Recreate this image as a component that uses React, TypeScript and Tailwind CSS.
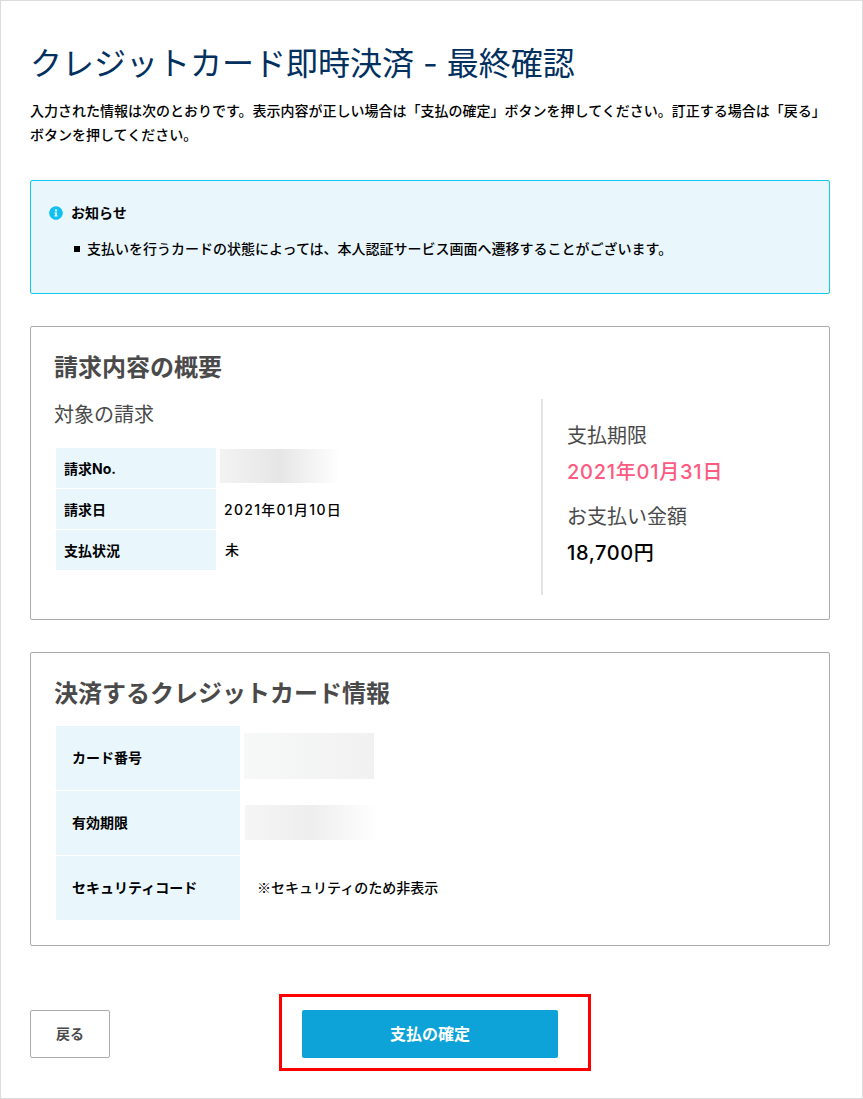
import { FaInfoCircle } from "react-icons/fa";

const FONT = "font-['Inter','Noto_Sans_CJK_JP',sans-serif]";

function InvoiceRow({ label, children }: { label: string; children: React.ReactNode }) {
  return (
    <div className="flex h-[41px]">
      <div className="flex h-10 w-[160px] shrink-0 items-center bg-[#e9f7fd] pl-2 text-[14px] font-bold text-black">
        {label}
      </div>
      <div className="flex h-10 items-center pl-[9px] text-[14px] font-medium text-black">{children}</div>
    </div>
  );
}

function CardRow({ label, children }: { label: string; children: React.ReactNode }) {
  return (
    <div className="flex h-[65px]">
      <div className="flex h-[64px] w-[184px] shrink-0 items-center bg-[#e9f7fd] pb-[2px] pl-4 text-[14px] font-bold text-black">
        {label}
      </div>
      <div className="flex h-[64px] items-center text-[14px] font-medium text-black">{children}</div>
    </div>
  );
}

export default function App() {
  return (
    <div className={`${FONT} h-[1099px] w-[863px] border border-[#dcdcdc] bg-white pl-[29px] pr-[32px]`}>
      <h1 className="mt-[39px] h-[48px] text-[32px] leading-[48px] text-[#02305f]">
        クレジットカード即時決済 - 最終確認
      </h1>
      <p className="mt-[11px] text-[14px] font-medium leading-[24px] text-black">
        入力された情報は次のとおりです。表示内容が正しい場合は「支払の確定」ボタンを押してください。訂正する場合は「戻る」ボタンを押してください。
      </p>

      {/* Notice */}
      <div className="mt-[33px] h-[114px] rounded-[2px] border border-[#10c8f0] bg-[#e9f7fd] pl-[18px] pt-[22px]">
        <div className="flex items-center gap-[8px] text-[14px] font-bold leading-[20px] text-black">
          <FaInfoCircle className="text-[14px] text-[#10c0f0]" />
          お知らせ
        </div>
        <div className="mt-[16px] flex items-center pl-[25px] text-[14px] font-medium leading-[20px] text-black">
          <span className="mr-[7px] h-[6px] w-[6px] bg-black" />
          支払いを行うカードの状態によっては、本人認証サービス画面へ遷移することがございます。
        </div>
      </div>

      {/* Invoice summary */}
      <section className="mt-[32px] h-[294px] rounded-[2px] border border-[#a9a9ae] pl-[25px] pt-[23px]">
        <h2 className="-ml-[2px] text-[24px] font-bold leading-[36px] text-[#4a4a4a]">請求内容の概要</h2>
        <div className="flex">
          <div className="w-[485px]">
            <h3 className="-ml-[2px] mt-[14px] text-[20px] leading-[30px] text-[#4a4a4a]">対象の請求</h3>
            <div className="mt-[18px]">
              <InvoiceRow label="請求No.">
                <div className="ml-[-5px] h-[34px] w-[120px] -translate-y-[2px] bg-linear-to-r from-[#f3f3f3] via-[#e6e6e6] to-white" />
              </InvoiceRow>
              <InvoiceRow label="請求日">
                <span className="-ml-[1px] tracking-[1.3px]">2021年01月10日</span>
              </InvoiceRow>
              <InvoiceRow label="支払状況">
                <span className="-translate-y-[1px]">未</span>
              </InvoiceRow>
            </div>
          </div>
          <div className="mt-[13px] h-[196px] w-[2px] bg-[#e2e2e2]" />
          <div className="pl-[24px] pt-[35px]">
            <div className="text-[20px] leading-[30px] text-[#4a4a4a]">支払期限</div>
            <div className="mt-[6px] text-[20px] font-medium leading-[30px] tracking-[0.75px] text-[#fc5a80]">
              2021年01月31日
            </div>
            <div className="mt-[15px] text-[20px] leading-[30px] text-[#4a4a4a]">お支払い金額</div>
            <div className="mt-[6px] text-[20px] font-medium leading-[30px] tracking-[0.6px] text-black">18,700円</div>
          </div>
        </div>
      </section>

      {/* Card details */}
      <section className="mt-[32px] h-[294px] rounded-[2px] border border-[#a9a9ae] pl-[25px] pt-[23px]">
        <h2 className="-ml-[2px] text-[24px] font-bold leading-[36px] text-[#4a4a4a]">決済するクレジットカード情報</h2>
        <div className="mt-[14px]">
          <CardRow label="カード番号">
            <div className="ml-[4px] h-[46px] w-[130px] -translate-y-[2px] bg-linear-to-r from-[#f7f8f8] to-[#f1f1f1]" />
          </CardRow>
          <CardRow label="有効期限">
            <div className="ml-[5px] h-[35px] w-[133px] -translate-y-[1px] bg-linear-to-r from-[#f5f5f5] via-[#eeeeee] to-white" />
          </CardRow>
          <CardRow label="セキュリティコード">
            <span className="ml-[17px] -translate-y-[1px] font-['Noto_Sans_CJK_JP',sans-serif]">
              ※セキュリティのため非表示
            </span>
          </CardRow>
        </div>
      </section>

      {/* Actions */}
      <div className="mt-[48px] flex items-start">
        <button className="mt-[16px] h-[48px] w-[80px] rounded-[2px] border border-[#a9a9ae] bg-white pb-[2px] text-[14px] font-bold text-[#4a4a4a]">
          戻る
        </button>
        <div className="ml-[169px] flex h-[77px] w-[312px] items-start border-[3px] border-[#ff0000] pl-[20px] pt-[13px]">
          <button className="h-[48px] w-[256px] rounded-[2px] bg-[#0ea3d8] text-[16px] font-bold text-white">
            支払の確定
          </button>
        </div>
      </div>
    </div>
  );
}
